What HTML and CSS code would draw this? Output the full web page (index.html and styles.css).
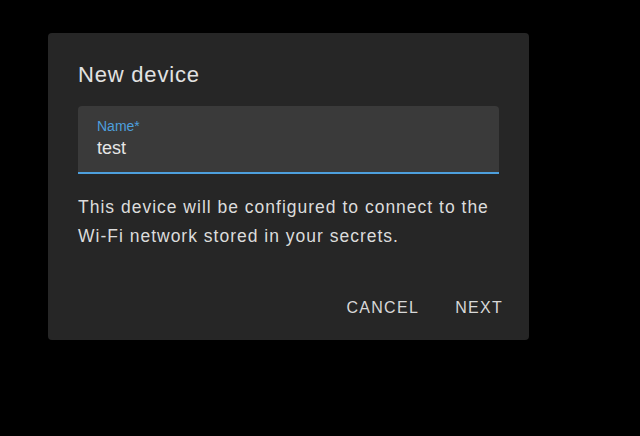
FILE: index.html
```html
<!DOCTYPE html>
<html>
<head>
<meta charset="utf-8">
<link rel="stylesheet" href="styles.css">
</head>
<body>
<div class="dialog">
  <h2 class="title">New device</h2>
  <div class="field">
    <div class="label">Name*</div>
    <div class="value">test</div>
  </div>
  <p class="desc">This device will be configured to connect to the Wi-Fi network stored in your secrets.</p>
  <div class="actions">
    <span class="btn">CANCEL</span>
    <span class="btn">NEXT</span>
  </div>
</div>
</body>
</html>
```
FILE: styles.css
```css
html, body {
  margin: 0;
  padding: 0;
  background: #000;
  width: 640px;
  height: 436px;
  overflow: hidden;
  font-family: "Liberation Sans", Arial, sans-serif;
}
.dialog {
  box-sizing: border-box;
  margin: 33px 0 0 48px;
  width: 481px;
  height: 307px;
  background: #262626;
  border-radius: 4px;
  padding: 28px 30px 0;
  display: flex;
  flex-direction: column;
}
.title {
  margin: 0;
  font-weight: normal;
  font-size: 22px;
  line-height: 28px;
  letter-spacing: 0.8px;
  color: #e2e2e2;
}
.field {
  box-sizing: border-box;
  margin-top: 17px;
  height: 68px;
  background: #3a3a3a;
  border-radius: 4px 4px 0 0;
  border-bottom: 2px solid #4d9fdd;
  padding: 12px 19px 0;
}
.label {
  font-size: 14px;
  line-height: 16px;
  color: #4d9fdd;
}
.value {
  font-size: 18px;
  line-height: 22px;
  color: #e6e6e6;
  margin-top: 3px;
}
.desc {
  margin: 19px 0 0;
  font-size: 17.5px;
  line-height: 28.5px;
  letter-spacing: 1px;
  color: #dcdcdc;
}
.actions {
  display: flex;
  justify-content: flex-end;
  gap: 36px;
  margin-top: auto;
  margin-right: -4px;
  padding-bottom: 22px;
}
.btn {
  font-size: 16px;
  line-height: 20px;
  letter-spacing: 1.3px;
  color: #d8d8d8;
}
```
